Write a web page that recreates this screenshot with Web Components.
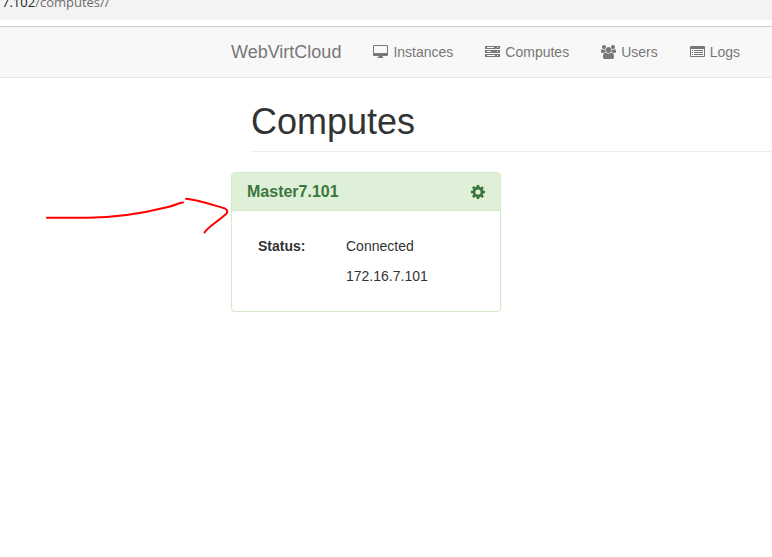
<!DOCTYPE html>
<html lang="en">
<head>
<meta charset="utf-8">
<title>WebVirtCloud - Computes</title>
<style>
  body { margin: 0; background: #fff; color: #333; font: 14px/20px "Liberation Sans", Arial, sans-serif; --page-start: 231px; }
</style>
</head>
<body>
<compute-page></compute-page>
<script>
const define = (name, html) => {
  const template = document.createElement('template');
  template.innerHTML = html;
  customElements.define(name, class extends HTMLElement {
    constructor() {
      super();
      this.attachShadow({ mode: 'open' }).append(template.content.cloneNode(true));
    }
  });
};

const icons = {
  desktop: ['0 0 15 14', '<path fill-rule="evenodd" d="M1 0H14Q15 0 15 1V10Q15 11 14 11H9.500V12L10.500 12.500V13H4.500V12.500L5.500 12V11H1Q0 11 0 10V1Q0 0 1 0ZM1 1V8H14V1Z"/>'],
  server: ['0 0 15 14', '<path fill-rule="evenodd" d="M0 1H15V4H0ZM2 2V3H9V2ZM12 2V3H13V2ZM0 5H15V8H0ZM2 6V7H6V6ZM12 6V7H13V6ZM0 9H15V12H0ZM2 10V11H10V10ZM12 10V11H13V10Z"/>'],
  users: ['64 0 1920 1792', '<path d="M657 896q-162 5-265 128h-134q-82 0-138-40.5t-56-118.5q0-353 124-353 6 0 43.5 21t97.5 42.5 119 21.5q67 0 133-23-5 37-5 66 0 139 81 256zm1071 637q0 120-73 189.5t-194 69.5h-874q-121 0-194-69.5t-73-189.5q0-53 3.5-103.5t14-109 26.5-108.5 43-97.5 62-81 85.5-53.5 111.5-20q10 0 43 21.5t73 48 107 48 135 21.5 135-21.5 107-48 73-48 43-21.5q61 0 111.5 20t85.5 53.5 62 81 43 97.5 26.5 108.5 14 109 3.5 103.5zm-1024-1277q0 106-75 181t-181 75-181-75-75-181 75-181 181-75 181 75 75 181zm704 384q0 159-112.5 271.5t-271.5 112.5-271.5-112.5-112.5-271.5 112.5-271.5 271.5-112.5 271.5 112.5 112.5 271.5zm576 225q0 78-56 118.5t-138 40.5h-134q-103-123-265-128 81-117 81-256 0-29-5-66 66 23 133 23 59 0 119-21.5t97.5-42.5 43.5-21q124 0 124 353zm-128-609q0 106-75 181t-181 75-181-75-75-181 75-181 181-75 181 75 75 181z"/>'],
  list: ['0 0 15 14', '<path fill-rule="evenodd" d="M1 1H14Q15 1 15 2V11Q15 12 14 12H1Q0 12 0 11V2Q0 1 1 1ZM1 4V11H14V4Z"/><path d="M2 5h1v1H2zM4 5h9v1H4zM2 7h1v1H2zM4 7h9v1H4zM2 9h1v1H2zM4 9h9v1H4z"/>'],
  cog: ['0 0 16 16', '<path fill-rule="evenodd" d="M6.800 1H9.200L9.600 3L10.600 3.400L12.300 2.200L13.900 3.800L12.700 5.500L13.100 6.500L15 6.800V9.200L13.100 9.600L12.700 10.600L13.900 12.300L12.300 13.900L10.600 12.700L9.600 13.100L9.200 15H6.800L6.400 13.100L5.400 12.700L3.700 13.900L2.100 12.300L3.300 10.600L2.900 9.600L1 9.200V6.800L2.900 6.400L3.300 5.400L2.100 3.700L3.700 2.100L5.400 3.300L6.400 2.900ZM8 5.400A2.600 2.600 0 1 0 8 10.600A2.600 2.600 0 1 0 8 5.400Z"/>']
};

customElements.define('ui-icon', class extends HTMLElement {
  constructor() {
    super();
    this.attachShadow({ mode: 'open' });
  }
  connectedCallback() {
    const [box, shapes] = icons[this.getAttribute('name')];
    this.shadowRoot.innerHTML = `
      <style>:host { display: block; flex: none; width: 15px; height: 14px; } svg { display: block; width: 100%; height: 100%; fill: currentColor; }</style>
      <svg viewBox="${box}" aria-hidden="true">${shapes}</svg>`;
  }
});

define('address-strip', `
  <style>
    :host { display: block; height: 20px; overflow: hidden; background: #f3f3f3; border-bottom: 6px solid #fff; color: #6e6e6e; font: 13px/20px "Open Sans", "Noto Sans", sans-serif; }
    div { margin-top: -8px; padding-left: 2px; }
    b { font-weight: 400; color: #222; }
  </style>
  <div><b>7.102</b>/computes//</div>`);

define('nav-link', `
  <style>
    :host { display: block; }
    a { display: flex; align-items: center; gap: 5px; color: #777; text-decoration: none; }
    a:hover { color: #333; }
  </style>
  <a href="#"><slot name="icon"></slot><span><slot></slot></span></a>`);

define('nav-bar', `
  <style>
    :host { display: block; background: #f8f8f8; border-top: 1px solid #ccc; border-bottom: 1px solid #e7e7e7; }
    nav { display: flex; align-items: center; gap: 32px; min-height: 50px; padding-left: var(--page-start); }
    .brand { color: #777; font-size: 18px; text-decoration: none; }
  </style>
  <nav><a class="brand" href="#"><slot name="brand"></slot></a><slot></slot></nav>`);

define('page-heading', `
  <style>
    :host { display: block; margin-left: 20px; padding: 24px 0 9px; border-bottom: 1px solid #eee; }
    h1 { margin: 0; font-size: 36px; font-weight: 400; line-height: 40px; }
  </style>
  <h1><slot></slot></h1>`);

define('compute-card', `
  <style>
    :host { display: block; box-sizing: border-box; max-width: 270px; border: 1px solid #d6e9c6; border-radius: 4px; background: #fff; box-shadow: 0 1px 1px rgba(0,0,0,.05); }
    header { display: flex; align-items: center; justify-content: space-between; padding: 9px 14px 8px 15px; background: #dff0d8; border-bottom: 1px solid #d6e9c6; border-radius: 3px 3px 0 0; color: #3c763d; }
    h2 { margin: 0; font-size: 16px; line-height: 20px; }
    a { color: inherit; }
    ui-icon { width: 16px; height: 16px; }
    .body { padding: 20px 26px; }
  </style>
  <header><h2><slot name="title"></slot></h2><a href="#" aria-label="Settings"><ui-icon name="cog"></ui-icon></a></header>
  <div class="body"><slot></slot></div>`);

define('compute-status', `
  <style>
    :host { display: block; }
    dl { display: grid; grid-template-columns: 88px 1fr; margin: 0; line-height: 30px; }
    dt { font-weight: 700; }
    dd { grid-column: 2; margin: 0; }
  </style>
  <dl><dt>Status:</dt><dd><slot name="state"></slot></dd><dd><slot name="address"></slot></dd></dl>`);

define('arrow-mark', `
  <style>
    :host { position: absolute; left: 40px; top: 190px; pointer-events: none; }
    svg { display: block; width: 200px; height: 50px; fill: none; stroke: #f00; stroke-width: 2; stroke-linecap: round; stroke-linejoin: round; }
  </style>
  <svg viewBox="40 190 200 50" aria-hidden="true"><path d="M47 217.700H88C124 217.500 160 209 168 207C176 205 179 202.500 183 202.500M186 198.700C198 199.500 211 204.500 225 208.500Q229 211 226 214C217 222 207 228 204.500 232.500"/></svg>`);

define('compute-page', `
  <style>
    :host { display: block; }
    main { padding-left: var(--page-start); }
    compute-card { margin-top: 20px; margin-right: 15px; }
  </style>
  <address-strip></address-strip>
  <nav-bar>
    <span slot="brand">WebVirtCloud</span>
    <nav-link><ui-icon slot="icon" name="desktop"></ui-icon>Instances</nav-link>
    <nav-link><ui-icon slot="icon" name="server"></ui-icon>Computes</nav-link>
    <nav-link><ui-icon slot="icon" name="users"></ui-icon>Users</nav-link>
    <nav-link><ui-icon slot="icon" name="list"></ui-icon>Logs</nav-link>
  </nav-bar>
  <main>
    <page-heading>Computes</page-heading>
    <compute-card>
      <span slot="title">Master7.101</span>
      <compute-status><span slot="state">Connected</span><span slot="address">172.16.7.101</span></compute-status>
    </compute-card>
  </main>
  <arrow-mark></arrow-mark>`);
</script>
</body>
</html>
